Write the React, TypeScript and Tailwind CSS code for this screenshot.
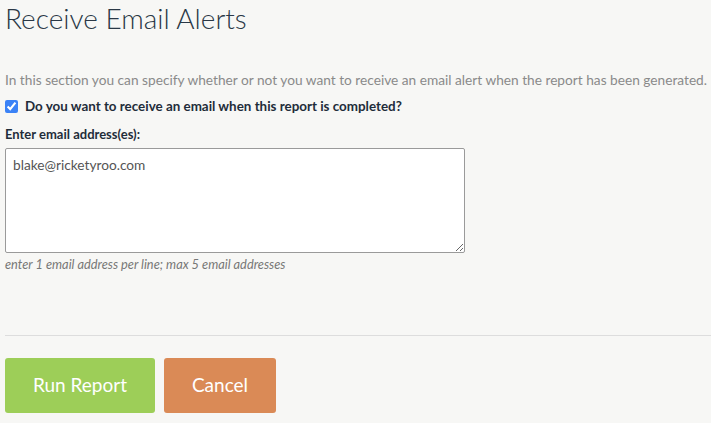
import React, { useState } from "react";

const App: React.FC = () => {
  const [wantsEmail, setWantsEmail] = useState<boolean>(true);
  const [emails, setEmails] = useState<string>("blake@ricketyroo.com");

  return (
    <div className="min-h-screen bg-[#f7f7f5] font-['Lato',sans-serif] text-[#1f2d3a]">
      <div className="pl-[5px]">
        {/* Header */}
        <h1 className="text-[28px] font-light leading-[36px] text-[#2a3846]">Receive Email Alerts</h1>

        {/* Intro */}
        <p className="mt-[35px] text-[13.7px] leading-[18px] text-[#8a8a8a] whitespace-nowrap">
          In this section you can specify whether or not you want to receive an email alert when the report has been generated.
        </p>

        <label className="mt-[8px] flex items-center gap-[7px] text-[13.4px] font-bold leading-[18px]">
          <input
            type="checkbox"
            checked={wantsEmail}
            onChange={(e) => setWantsEmail(e.target.checked)}
            className="h-[13px] w-[13px] accent-[#3b82f6]"
          />
          Do you want to receive an email when this report is completed?
        </label>

        <div className="mt-[10px] text-[13px] font-bold leading-[18px]">Enter email address(es):</div>
        <textarea
          value={emails}
          onChange={(e) => setEmails(e.target.value)}
          className="mt-[5px] block h-[105px] w-[460px] rounded-[2px] border border-[#9a9a9a] bg-white px-[7px] pt-[7px] text-[13.7px] leading-[18px] text-[#555]"
        />
        <p className="mt-[3px] text-[12.8px] italic leading-[16px] text-[#777]">
          enter 1 email address per line; max 5 email addresses
        </p>
      </div>

      {/* Divider */}
      <div className="ml-[5px] mt-[63px] border-t border-[#dddddd]" />

      {/* Actions */}
      <div className="mt-[22px] flex gap-[9px] pl-[5px]">
        <button className="h-[55px] w-[150px] rounded-[3px] bg-[#9dce58] text-[19px] text-white">Run Report</button>
        <button className="h-[55px] w-[112px] rounded-[3px] bg-[#da8a56] text-[19px] text-white">Cancel</button>
      </div>
    </div>
  );
};

export default App;
